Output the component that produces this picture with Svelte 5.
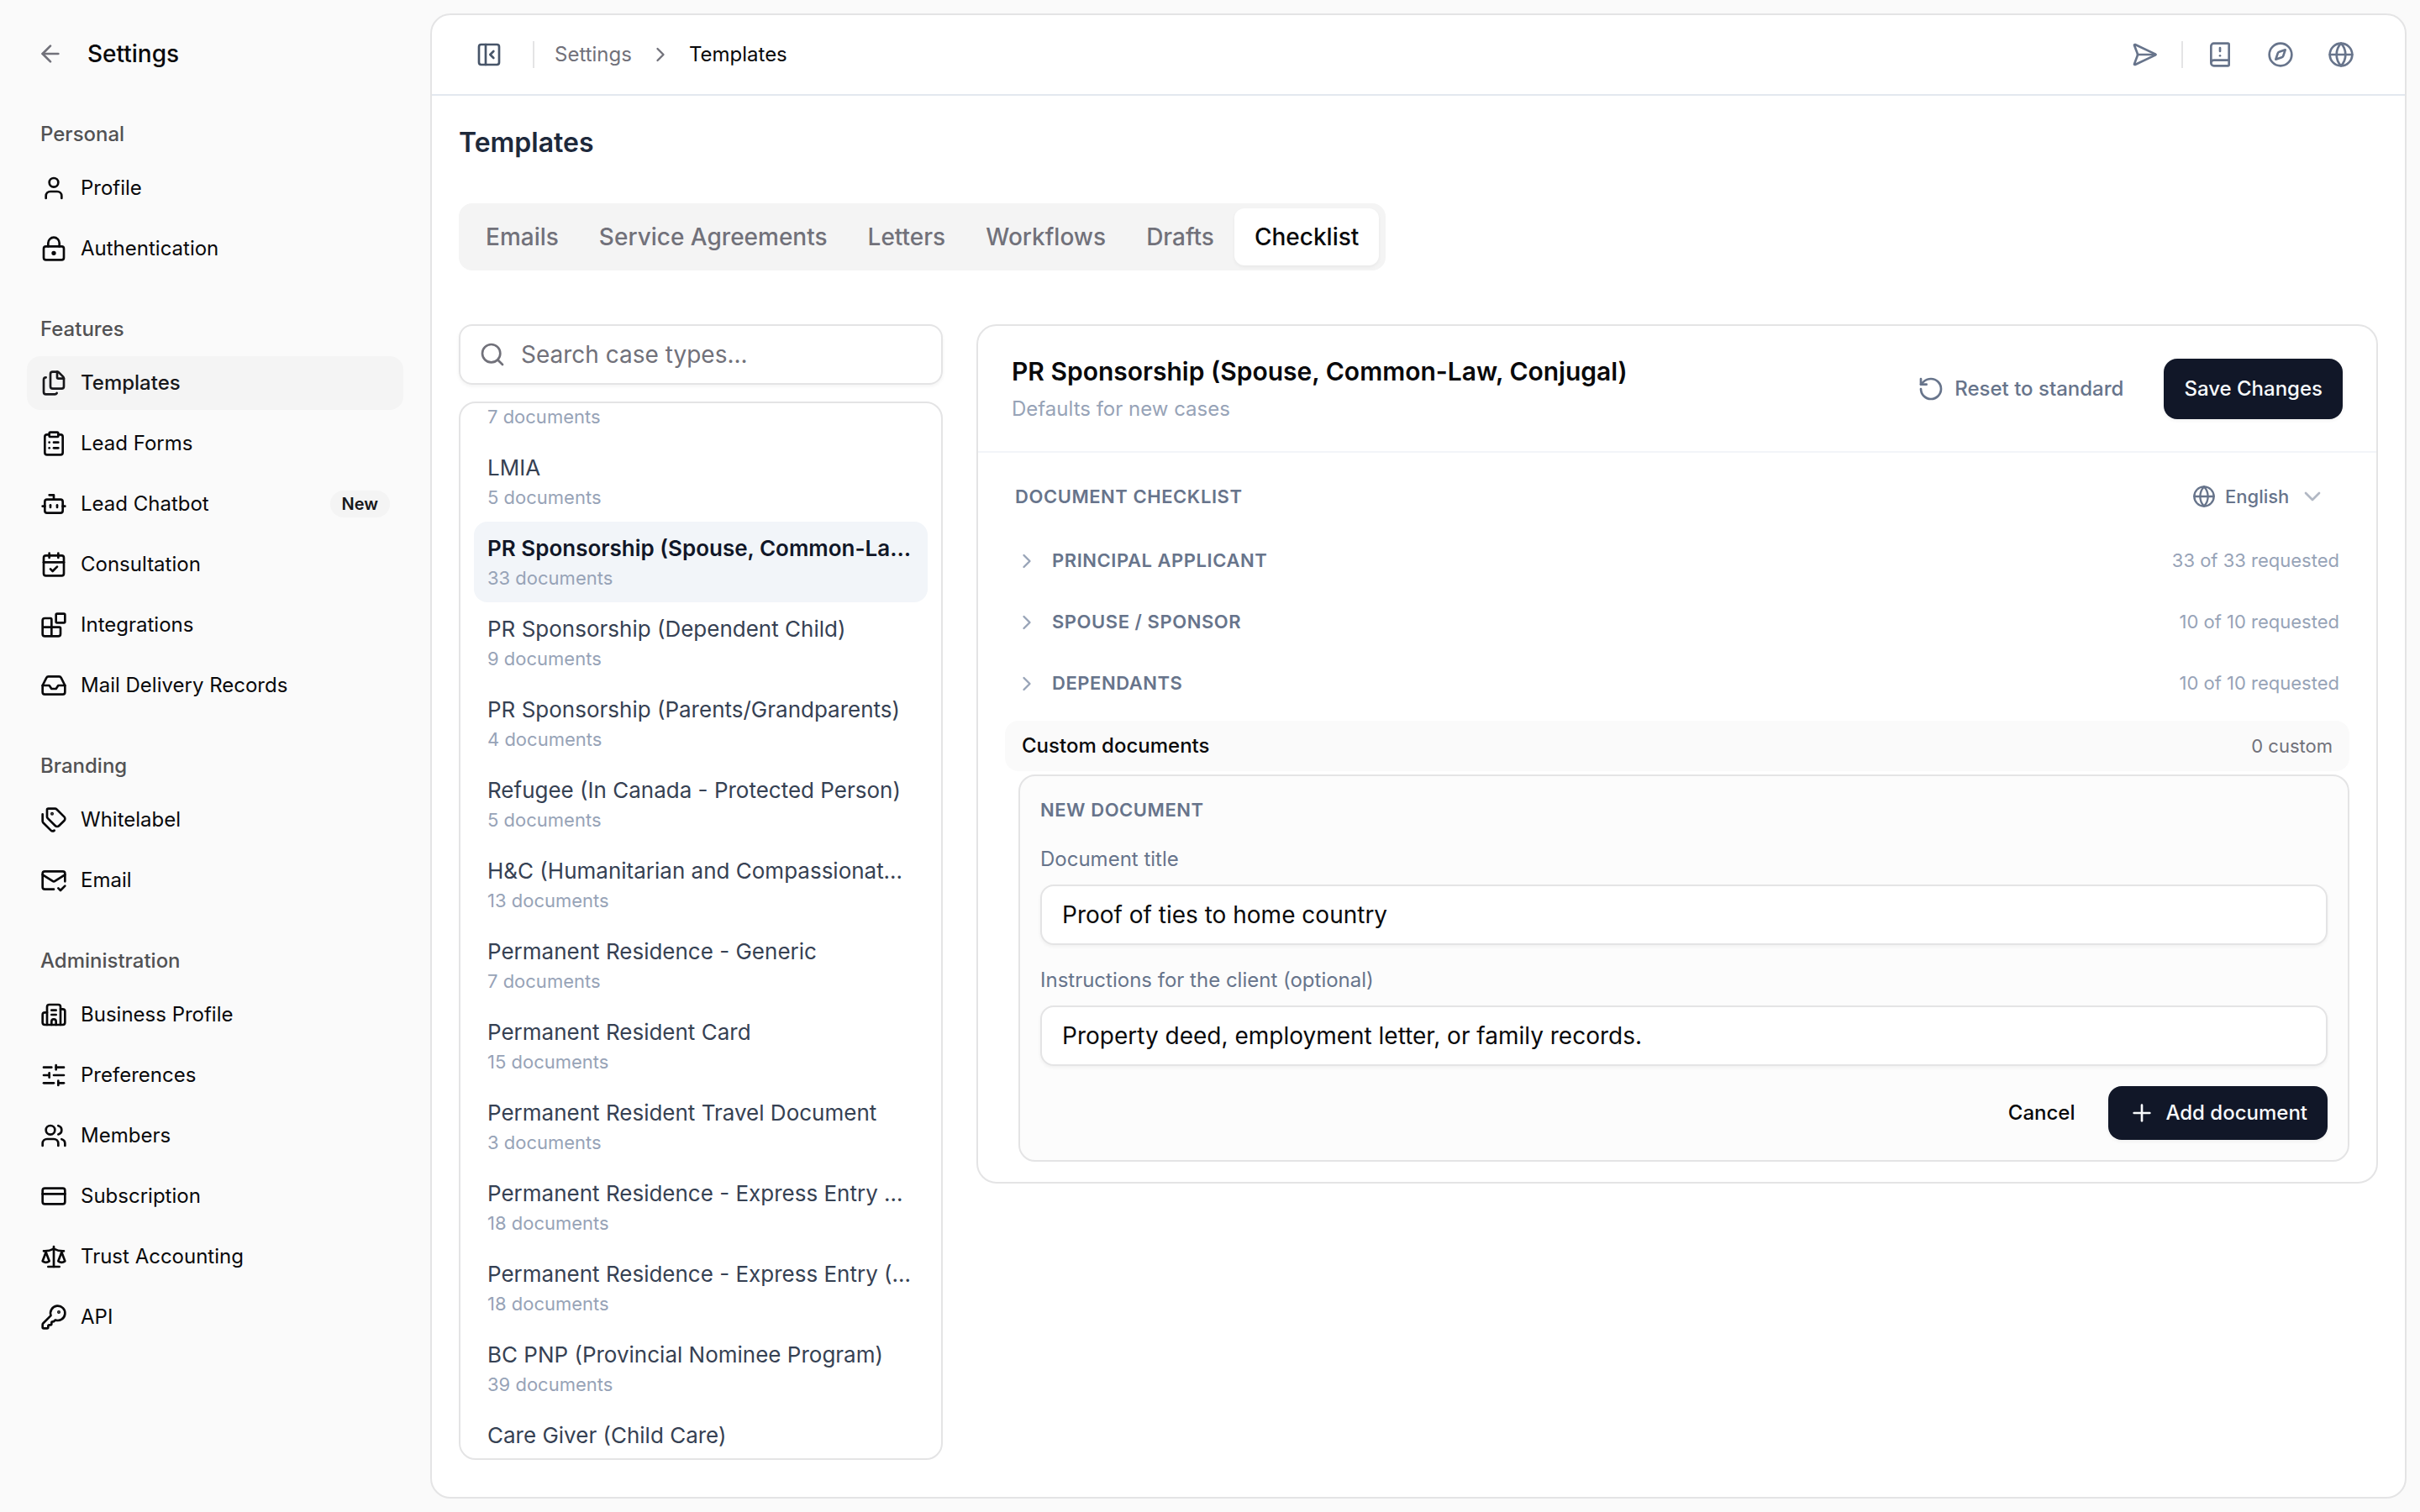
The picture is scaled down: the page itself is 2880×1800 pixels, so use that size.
<script>
  import { onMount } from 'svelte';

  const icons = {
    arrowLeft: '<path d="m12 19-7-7 7-7"/><path d="M19 12H5"/>',
    user: '<path d="M19 21v-2a4 4 0 0 0-4-4H9a4 4 0 0 0-4 4v2"/><circle cx="12" cy="7" r="4"/>',
    lock: '<circle cx="12" cy="16" r="1"/><rect x="3" y="10" width="18" height="12" rx="2"/><path d="M7 10V7a5 5 0 0 1 10 0v3"/>',
    files: '<path d="M15 2h-4a2 2 0 0 0-2 2v11a2 2 0 0 0 2 2h8a2 2 0 0 0 2-2V8"/><path d="M16.706 2.706A2.4 2.4 0 0 0 15 2v5a1 1 0 0 0 1 1h5a2.4 2.4 0 0 0-.706-1.706z"/><path d="M5 7a2 2 0 0 0-2 2v11a2 2 0 0 0 2 2h8a2 2 0 0 0 1.732-1"/>',
    clipboard: '<rect width="8" height="4" x="8" y="2" rx="1"/><path d="M16 4h2a2 2 0 0 1 2 2v14a2 2 0 0 1-2 2H6a2 2 0 0 1-2-2V6a2 2 0 0 1 2-2h2"/><path d="M12 11h4"/><path d="M12 16h4"/><path d="M8 11h.01"/><path d="M8 16h.01"/>',
    bot: '<path d="M12 8V4H8"/><rect width="16" height="12" x="4" y="8" rx="2"/><path d="M2 14h2"/><path d="M20 14h2"/><path d="M15 13v2"/><path d="M9 13v2"/>',
    calendar: '<path d="M8 2v4"/><path d="M16 2v4"/><rect width="18" height="18" x="3" y="4" rx="2"/><path d="M3 10h18"/><path d="m9 16 2 2 4-4"/>',
    blocks: '<path d="M10 22V7a1 1 0 0 0-1-1H4a2 2 0 0 0-2 2v12a2 2 0 0 0 2 2h12a2 2 0 0 0 2-2v-5a1 1 0 0 0-1-1H2"/><rect x="14" y="2" width="8" height="8" rx="1"/>',
    inbox: '<path d="M22 12h-6l-2 3h-4l-2-3H2"/><path d="M5.45 5.11 2 12v6a2 2 0 0 0 2 2h16a2 2 0 0 0 2-2v-6l-3.45-6.89A2 2 0 0 0 16.76 4H7.24a2 2 0 0 0-1.79 1.11z"/>',
    tags: '<path d="M13.172 2a2 2 0 0 1 1.414.586l6.71 6.71a2.4 2.4 0 0 1 0 3.408l-4.592 4.592a2.4 2.4 0 0 1-3.408 0l-6.71-6.71A2 2 0 0 1 6 9.172V3a1 1 0 0 1 1-1z"/><path d="M2 7v6.172a2 2 0 0 0 .586 1.414l6.71 6.71a2.4 2.4 0 0 0 3.191.193"/><circle cx="10.5" cy="6.5" r=".5" fill="currentColor"/>',
    mailCheck: '<path d="M22 13V6a2 2 0 0 0-2-2H4a2 2 0 0 0-2 2v12c0 1.1.9 2 2 2h8"/><path d="m22 7-8.97 5.7a1.94 1.94 0 0 1-2.06 0L2 7"/><path d="m16 19 2 2 4-4"/>',
    building: '<path d="M10 12h4"/><path d="M10 8h4"/><path d="M14 21v-3a2 2 0 0 0-4 0v3"/><path d="M6 10H4a2 2 0 0 0-2 2v7a2 2 0 0 0 2 2h16a2 2 0 0 0 2-2V9a2 2 0 0 0-2-2h-2"/><path d="M6 21V5a2 2 0 0 1 2-2h8a2 2 0 0 1 2 2v16"/>',
    sliders: '<path d="M10 5H3"/><path d="M12 19H3"/><path d="M14 3v4"/><path d="M16 17v4"/><path d="M21 12h-9"/><path d="M21 19h-5"/><path d="M21 5h-7"/><path d="M8 10v4"/><path d="M8 12H3"/>',
    users: '<path d="M16 21v-2a4 4 0 0 0-4-4H6a4 4 0 0 0-4 4v2"/><path d="M16 3.128a4 4 0 0 1 0 7.744"/><path d="M22 21v-2a4 4 0 0 0-3-3.87"/><circle cx="9" cy="7" r="4"/>',
    card: '<rect width="20" height="14" x="2" y="5" rx="2"/><path d="M2 10h20"/>',
    scale: '<path d="M12 3v18"/><path d="m19 8 3 8a5 5 0 0 1-6 0zV7"/><path d="M3 7h1a17 17 0 0 0 8-2 17 17 0 0 0 8 2h1"/><path d="m5 8 3 8a5 5 0 0 1-6 0zV7"/><path d="M7 21h10"/>',
    key: '<path d="M2.586 17.414A2 2 0 0 0 2 18.828V21a1 1 0 0 0 1 1h3a1 1 0 0 0 1-1v-1a1 1 0 0 1 1-1h1a1 1 0 0 0 1-1v-1a1 1 0 0 1 1-1h.172a2 2 0 0 0 1.414-.586l.814-.814a6.5 6.5 0 1 0-4-4z"/><circle cx="16.5" cy="7.5" r=".5" fill="currentColor"/>',
    panel: '<rect width="18" height="18" x="3" y="3" rx="2"/><path d="M9 3v18"/><path d="m16 15-3-3 3-3"/>',
    send: '<path d="M3.714 3.048a.498.498 0 0 0-.683.627l2.843 7.627a2 2 0 0 1 0 1.396l-2.842 7.627a.498.498 0 0 0 .682.627l18-8.5a.5.5 0 0 0 0-.904z"/><path d="M6 12h16"/>',
    book: '<path d="M12 13h.01"/><path d="M12 6v3"/><path d="M4 19.5v-15A2.5 2.5 0 0 1 6.5 2H19a1 1 0 0 1 1 1v18a1 1 0 0 1-1 1H6.5a1 1 0 0 1 0-5H20"/>',
    compass: '<path d="m16.24 7.76-1.804 5.411a2 2 0 0 1-1.265 1.265L7.76 16.24l1.804-5.411a2 2 0 0 1 1.265-1.265z"/><circle cx="12" cy="12" r="10"/>',
    globe: '<circle cx="12" cy="12" r="10"/><path d="M12 2a14.5 14.5 0 0 0 0 20 14.5 14.5 0 0 0 0-20"/><path d="M2 12h20"/>',
    search: '<path d="m21 21-4.34-4.34"/><circle cx="11" cy="11" r="8"/>',
    reset: '<path d="M3 12a9 9 0 1 0 9-9 9.75 9.75 0 0 0-6.74 2.74L3 8"/><path d="M3 3v5h5"/>',
    plus: '<path d="M5 12h14"/><path d="M12 5v14"/>',
    chevronRight: '<path d="m9 18 6-6-6-6"/>',
    chevronDown: '<path d="m6 9 6 6 6-6"/>'
  };

  const navGroups = [
    {
      label: 'Personal',
      items: [
        { name: 'Profile', icon: 'user' },
        { name: 'Authentication', icon: 'lock' }
      ]
    },
    {
      label: 'Features',
      items: [
        { name: 'Templates', icon: 'files' },
        { name: 'Lead Forms', icon: 'clipboard' },
        { name: 'Lead Chatbot', icon: 'bot', badge: 'New' },
        { name: 'Consultation', icon: 'calendar' },
        { name: 'Integrations', icon: 'blocks' },
        { name: 'Mail Delivery Records', icon: 'inbox' }
      ]
    },
    {
      label: 'Branding',
      items: [
        { name: 'Whitelabel', icon: 'tags' },
        { name: 'Email', icon: 'mailCheck' }
      ]
    },
    {
      label: 'Administration',
      items: [
        { name: 'Business Profile', icon: 'building' },
        { name: 'Preferences', icon: 'sliders' },
        { name: 'Members', icon: 'users' },
        { name: 'Subscription', icon: 'card' },
        { name: 'Trust Accounting', icon: 'scale' },
        { name: 'API', icon: 'key' }
      ]
    }
  ];

  const tabs = ['Emails', 'Service Agreements', 'Letters', 'Workflows', 'Drafts', 'Checklist'];

  const caseTypes = [
    { name: 'Work Permit', count: 7 },
    { name: 'LMIA', count: 5 },
    { name: 'PR Sponsorship (Spouse, Common-Law, Conjugal)', count: 33 },
    { name: 'PR Sponsorship (Dependent Child)', count: 9 },
    { name: 'PR Sponsorship (Parents/Grandparents)', count: 4 },
    { name: 'Refugee (In Canada - Protected Person)', count: 5 },
    { name: 'H&C (Humanitarian and Compassionate Grounds)', count: 13 },
    { name: 'Permanent Residence - Generic', count: 7 },
    { name: 'Permanent Resident Card', count: 15 },
    { name: 'Permanent Resident Travel Document', count: 3 },
    { name: 'Permanent Residence - Express Entry Profile', count: 18 },
    { name: 'Permanent Residence - Express Entry (PNP)', count: 18 },
    { name: 'BC PNP (Provincial Nominee Program)', count: 39 },
    { name: 'Care Giver (Child Care)', count: 12 }
  ];

  const sections = [
    { name: 'PRINCIPAL APPLICANT', requested: 33, total: 33 },
    { name: 'SPOUSE / SPONSOR', requested: 10, total: 10 },
    { name: 'DEPENDANTS', requested: 10, total: 10 }
  ];

  let activeTab = $state('Checklist');
  let selected = $state('PR Sponsorship (Spouse, Common-Law, Conjugal)');
  let searchQuery = $state('');
  let docTitle = $state('Proof of ties to home country');
  let docNote = $state('Property deed, employment letter, or family records.');
  let list;

  let visibleTypes = $derived(
    caseTypes.filter((type) => type.name.toLowerCase().includes(searchQuery.toLowerCase()))
  );

  onMount(() => {
    list.scrollTop = 67;
  });
</script>

{#snippet icon(name, small = false)}
  <svg class="icon" class:small viewBox="0 0 24 24" aria-hidden="true">{@html icons[name]}</svg>
{/snippet}

<div class="app">
  <aside class="sidebar">
    <div class="sidebar-header">
      <button class="back" aria-label="Back">{@render icon('arrowLeft')}</button>
      <span>Settings</span>
    </div>
    {#each navGroups as group}
      <nav class="nav-group" aria-label={group.label}>
        <div class="nav-label">{group.label}</div>
        {#each group.items as item}
          <a href="#settings" class="nav-item" class:active={item.name === 'Templates'}>
            {@render icon(item.icon)}
            <span>{item.name}</span>
            {#if item.badge}
              <span class="badge">{item.badge}</span>
            {/if}
          </a>
        {/each}
      </nav>
    {/each}
  </aside>

  <main class="main">
    <header class="topbar">
      <button class="icon-button toggle" aria-label="Toggle sidebar">{@render icon('panel')}</button>
      <div class="separator"></div>
      <nav class="breadcrumb" aria-label="Breadcrumb">
        <a href="#settings">Settings</a>
        {@render icon('chevronRight', true)}
        <span class="current">Templates</span>
      </nav>
      <div class="actions">
        <button class="icon-button" aria-label="Send">{@render icon('send')}</button>
        <div class="separator"></div>
        <button class="icon-button" aria-label="Guide">{@render icon('book')}</button>
        <button class="icon-button" aria-label="Explore">{@render icon('compass')}</button>
        <button class="icon-button" aria-label="Language">{@render icon('globe')}</button>
      </div>
    </header>

    <div class="content">
      <h1>Templates</h1>

      <div class="tabs" role="tablist">
        {#each tabs as tab}
          <button
            role="tab"
            class="tab"
            class:active={activeTab === tab}
            aria-selected={activeTab === tab}
            onclick={() => (activeTab = tab)}
          >
            {tab}
          </button>
        {/each}
      </div>

      <div class="columns">
        <div class="case-column">
          <label class="search">
            {@render icon('search')}
            <input type="text" placeholder="Search case types..." aria-label="Search case types" bind:value={searchQuery} />
          </label>
          <div class="case-list" bind:this={list}>
            {#each visibleTypes as type}
              <button class="case" class:active={selected === type.name} onclick={() => (selected = type.name)}>
                <span class="case-name">{type.name}</span>
                <span class="case-count">{type.count} documents</span>
              </button>
            {/each}
          </div>
        </div>

        <section class="panel">
          <div class="panel-header">
            <div class="panel-title">
              <h2>{selected}</h2>
              <p>Defaults for new cases</p>
            </div>
            <button class="button ghost muted">{@render icon('reset')}Reset to standard</button>
            <button class="button primary tall">Save Changes</button>
          </div>

          <div class="panel-body">
            <div class="checklist-header">
              <h3 class="caps">DOCUMENT CHECKLIST</h3>
              <div class="language">
                {@render icon('globe', true)}
                <select aria-label="Checklist language">
                  <option>English</option>
                </select>
                {@render icon('chevronDown')}
              </div>
            </div>

            {#each sections as section}
              <button class="section-row">
                {@render icon('chevronRight', true)}
                <span class="caps">{section.name}</span>
                <span class="requested">{section.requested} of {section.total} requested</span>
              </button>
            {/each}

            <div class="custom-row">
              <span>Custom documents</span>
              <span class="custom-count">0 custom</span>
            </div>

            <form class="new-document" onsubmit={(e) => e.preventDefault()}>
              <h3 class="caps">NEW DOCUMENT</h3>
              <div class="field">
                <label for="doc-title">Document title</label>
                <input id="doc-title" type="text" bind:value={docTitle} />
              </div>
              <div class="field">
                <label for="doc-note">Instructions for the client (optional)</label>
                <input id="doc-note" type="text" bind:value={docNote} />
              </div>
              <div class="form-actions">
                <button type="button" class="button ghost">Cancel</button>
                <button type="submit" class="button primary">{@render icon('plus')}Add document</button>
              </div>
            </form>
          </div>
        </section>
      </div>
    </div>
  </main>
</div>

<style>
  :global(body) {
    margin: 0;
    background: #fafafa;
  }

  .app {
    display: flex;
    height: 100vh;
    box-sizing: border-box;
    padding: 16px 16px 16px 0;
    font-family: Inter, sans-serif;
    font-optical-sizing: none;
    font-size: 24px;
    line-height: 36px;
    color: #09090b;
    background: #fafafa;
  }

  .app :global(*) {
    box-sizing: border-box;
  }

  h1,
  h2,
  h3,
  p {
    margin: 0;
  }

  button,
  input,
  select {
    margin: 0;
    padding: 0;
    border: none;
    background: transparent;
    font: inherit;
    font-optical-sizing: none;
    color: inherit;
  }

  button {
    cursor: pointer;
  }

  a {
    color: inherit;
    text-decoration: none;
  }

  .icon {
    width: 32px;
    height: 32px;
    flex-shrink: 0;
    fill: none;
    stroke: currentColor;
    stroke-width: 2;
    stroke-linecap: round;
    stroke-linejoin: round;
  }

  .icon.small {
    width: 28px;
    height: 28px;
  }

  /* Sidebar */
  .sidebar {
    width: 512px;
    flex-shrink: 0;
    padding: 0 32px;
  }

  .sidebar-header {
    display: flex;
    align-items: center;
    gap: 16px;
    height: 96px;
    font-size: 28px;
    font-weight: 500;
  }

  .back {
    display: flex;
    align-items: center;
    justify-content: center;
    width: 56px;
    height: 56px;
    color: #71717a;
  }

  .nav-group {
    display: flex;
    flex-direction: column;
    gap: 8px;
    padding: 16px 0;
  }

  .nav-label {
    padding: 14px 16px;
    margin-bottom: -8px;
    font-weight: 500;
    color: #525254;
  }

  .nav-item {
    display: flex;
    align-items: center;
    gap: 16px;
    height: 64px;
    padding: 0 16px;
    border-radius: 16px;
  }

  .nav-item.active {
    background: #f4f4f4;
    font-weight: 500;
    color: #18181b;
  }

  .badge {
    margin-left: auto;
    padding: 0 14px;
    border-radius: 16px;
    background: #f4f4f4;
    font-size: 20px;
    font-weight: 600;
    line-height: 32px;
    color: #18181b;
  }

  /* Main card */
  .main {
    display: flex;
    flex: 1;
    flex-direction: column;
    min-width: 0;
    border: 2px solid #e4e4e5;
    border-radius: 24px;
    background: #fff;
  }

  .topbar {
    display: flex;
    align-items: center;
    height: 96px;
    flex-shrink: 0;
    padding: 0 44px 0 36px;
    border-bottom: 2px solid #e3e8ef;
  }

  .icon-button {
    display: flex;
    align-items: center;
    justify-content: center;
    width: 64px;
    height: 64px;
    color: #67748b;
  }

  .toggle {
    margin-right: 20px;
    color: #475569;
  }

  .separator {
    width: 2px;
    height: 32px;
    background: #e4e4e5;
  }

  .breadcrumb {
    display: flex;
    align-items: center;
    gap: 20px;
    margin-left: 24px;
    color: #71717a;
  }

  .current {
    color: #09090b;
  }

  .actions {
    display: flex;
    align-items: center;
    gap: 8px;
    margin-left: auto;
  }

  .actions .separator {
    margin: 0 4px;
  }

  .content {
    display: flex;
    flex: 1;
    flex-direction: column;
    min-height: 0;
    padding: 32px 32px 44px;
  }

  h1 {
    font-size: 32px;
    font-weight: 600;
    line-height: 48px;
    font-variation-settings: 'opsz' 16;
    color: #1e293b;
  }

  .tabs {
    display: flex;
    align-self: flex-start;
    margin: 48px 0 64px;
    padding: 6px 8px;
    border-radius: 16px;
    background: #f4f4f4;
  }

  .tab {
    height: 68px;
    padding: 0 24px;
    border-radius: 12px;
    font-size: 28px;
    font-weight: 500;
    color: #71717a;
  }

  .tab.active {
    background: #fff;
    color: #09090b;
    box-shadow: 0 2px 4px rgba(0, 0, 0, 0.05);
  }

  .columns {
    display: flex;
    flex: 1;
    gap: 40px;
    min-height: 0;
  }

  /* Case types */
  .case-column {
    display: flex;
    flex-direction: column;
    gap: 20px;
    width: 576px;
    flex-shrink: 0;
  }

  .search {
    display: flex;
    align-items: center;
    gap: 18px;
    height: 72px;
    flex-shrink: 0;
    padding: 0 22px;
    border: 2px solid #e4e4e5;
    border-radius: 16px;
    color: #71717a;
    box-shadow: 0 2px 4px rgba(0, 0, 0, 0.05);
  }

  .search input {
    flex: 1;
    min-width: 0;
    outline: none;
    font-size: 28px;
    color: #09090b;
  }

  .search input::placeholder {
    color: #71717a;
    opacity: 1;
  }

  .case-list {
    flex: 1;
    min-height: 0;
    padding: 16px;
    overflow-y: auto;
    scrollbar-width: none;
    border: 2px solid #e4e4e5;
    border-radius: 20px;
  }

  .case {
    display: block;
    width: 100%;
    height: 96px;
    padding: 12px 16px;
    border-radius: 16px;
    text-align: left;
  }

  .case.active {
    background: #f2f5f9;
  }

  .case-name {
    display: block;
    overflow: hidden;
    white-space: nowrap;
    text-overflow: ellipsis;
    font-size: 26px;
    line-height: 40px;
    color: #364153;
  }

  .case.active .case-name {
    font-weight: 600;
    color: #111728;
  }

  .case-count {
    display: block;
    padding-bottom: 2px;
    font-size: 22px;
    line-height: 30px;
    color: #97a3b7;
  }

  /* Checklist panel */
  .panel {
    flex: 1;
    align-self: flex-start;
    min-width: 0;
    border: 2px solid #e4e4e5;
    border-radius: 24px;
  }

  .panel-header {
    display: flex;
    align-items: center;
    gap: 24px;
    padding: 32px 40px;
    border-bottom: 2px solid #f2f5f9;
  }

  .panel-title {
    flex: 1;
  }

  h2 {
    margin-bottom: 4px;
    font-size: 30px;
    font-weight: 600;
    line-height: 45px;
  }

  .panel-title p {
    color: #97a3b7;
  }

  .button {
    display: flex;
    align-items: center;
    gap: 12px;
    height: 64px;
    padding: 0 24px;
    border-radius: 16px;
    font-weight: 500;
  }

  .button.primary {
    background: #111728;
    color: #f8fafc;
    box-shadow: 0 2px 4px rgba(0, 0, 0, 0.05);
  }

  .button.tall {
    height: 72px;
  }

  .button.muted {
    color: #67748b;
  }

  .panel-body {
    padding: 24px 32px;
  }

  .caps {
    font-size: 22px;
    font-weight: 600;
    line-height: 33px;
    letter-spacing: 0.025em;
    color: #67748b;
  }

  .checklist-header {
    display: flex;
    align-items: center;
    justify-content: space-between;
    height: 56px;
    margin-bottom: 12px;
    padding: 0 28px 0 12px;
  }

  .language {
    display: flex;
    align-items: center;
    gap: 11px;
    color: #67748b;
  }

  .language select {
    appearance: none;
    font-size: 22px;
    font-weight: 500;
  }

  .language .icon:last-child {
    opacity: 0.5;
  }

  .section-row {
    display: flex;
    align-items: center;
    gap: 16px;
    width: 100%;
    padding: 20px 12px;
    color: #97a3b7;
  }

  .requested {
    margin-left: auto;
    font-size: 22px;
    line-height: 33px;
  }

  .custom-row {
    display: flex;
    align-items: center;
    justify-content: space-between;
    height: 60px;
    margin: 8px 0 4px;
    padding: 0 20px;
    border-radius: 16px;
    background: #fafafa;
    font-weight: 500;
  }

  .custom-count {
    font-size: 22px;
    font-weight: 400;
    color: #71717a;
  }

  .new-document {
    display: flex;
    flex-direction: column;
    gap: 24px;
    margin-left: 16px;
    padding: 24px;
    border: 2px solid #e4e4e5;
    border-radius: 20px;
    background: #fcfcfc;
  }

  .field {
    display: flex;
    flex-direction: column;
    gap: 12px;
  }

  .field label {
    color: #67748b;
  }

  .field input {
    height: 72px;
    padding: 0 24px;
    border: 2px solid #e4e4e5;
    border-radius: 16px;
    background: #fff;
    font-size: 28px;
    box-shadow: 0 2px 4px rgba(0, 0, 0, 0.05);
  }

  .form-actions {
    display: flex;
    justify-content: flex-end;
    gap: 16px;
  }
</style>
